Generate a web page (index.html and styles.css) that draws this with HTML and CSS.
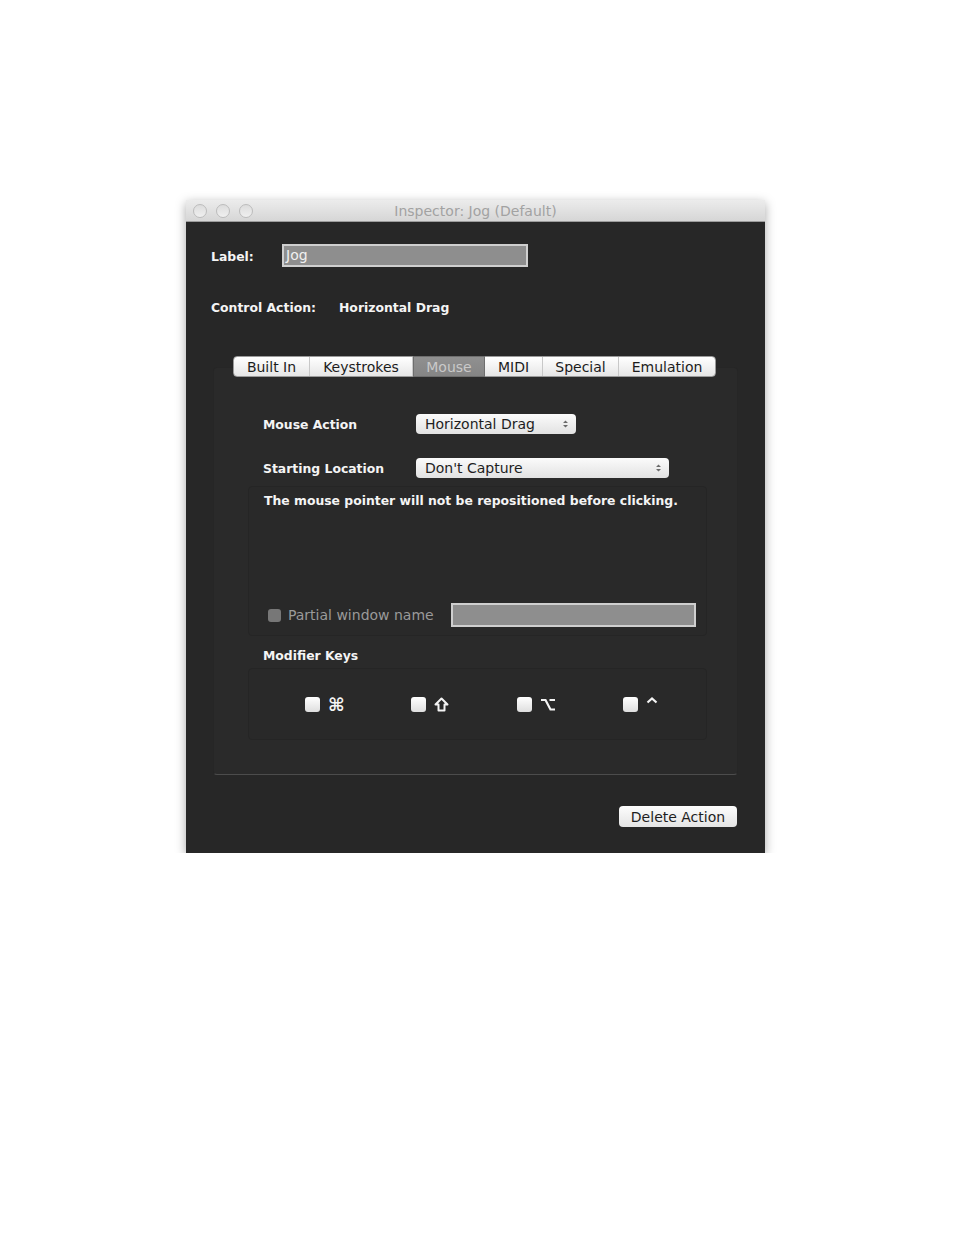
FILE: index.html
```html
<!DOCTYPE html>
<html lang="en">

<head>
    <meta charset="UTF-8">
    <title>Inspector: Jog (Default)</title>
    <link rel="stylesheet" href="styles.css">
</head>

<body>
    <div class="window">
        <div class="titlebar">
            <div class="lights">
                <span class="light"></span>
                <span class="light"></span>
                <span class="light"></span>
            </div>
            <div class="title">Inspector: Jog (Default)</div>
            <div></div>
        </div>

        <div class="content">
            <div class="row label-row">
                <span class="label name-label">Label:</span>
                <div class="textfield label-field">Jog</div>
            </div>

            <div class="row action-row">
                <span class="label action-label">Control Action:</span>
                <span class="label">Horizontal Drag</span>
            </div>

            <div class="tabview">
                <div class="tabs">
                    <span class="tab tab-builtin">Built In</span>
                    <span class="tab tab-keys">Keystrokes</span>
                    <span class="tab tab-mouse selected">Mouse</span>
                    <span class="tab tab-midi">MIDI</span>
                    <span class="tab tab-special">Special</span>
                    <span class="tab tab-emu last">Emulation</span>
                </div>

                <div class="tabbox">
                    <div class="form-row">
                        <span class="label form-label">Mouse Action</span>
                        <div class="popup popup-action">
                            <span>Horizontal Drag</span>
                            <svg class="arrows" width="7" height="10" viewBox="0 0 7 10">
                                <path d="M1 4 L3.5 1.5 L6 4 Z M1 6 L3.5 8.5 L6 6 Z" fill="#6a6a6a" />
                            </svg>
                        </div>
                    </div>

                    <div class="form-row start-row">
                        <span class="label form-label">Starting Location</span>
                        <div class="popup popup-start">
                            <span>Don't Capture</span>
                            <svg class="arrows" width="7" height="10" viewBox="0 0 7 10">
                                <path d="M1 4 L3.5 1.5 L6 4 Z M1 6 L3.5 8.5 L6 6 Z" fill="#6a6a6a" />
                            </svg>
                        </div>
                    </div>

                    <div class="groupbox desc-box">
                        <p class="label desc">The mouse pointer will not be repositioned before clicking.</p>
                        <div class="partial-row">
                            <span class="checkbox disabled"></span>
                            <span class="partial-text">Partial window name</span>
                            <div class="textfield partial-field"></div>
                        </div>
                    </div>

                    <div class="label modifier-title">Modifier Keys</div>

                    <div class="groupbox modifier-box">
                        <div class="modifier">
                            <span class="checkbox"></span>
                            <span class="key">⌘</span>
                        </div>
                        <div class="modifier">
                            <span class="checkbox"></span>
                            <svg class="key-icon" width="15" height="15" viewBox="0 0 15 15">
                                <path d="M7.5 1.5 L13.5 7.5 H10.5 V13.5 H4.5 V7.5 H1.5 Z" fill="none" stroke="#f4f4f4" stroke-width="2" stroke-linejoin="round" />
                            </svg>
                        </div>
                        <div class="modifier">
                            <span class="checkbox"></span>
                            <svg class="key-icon" width="16" height="15" viewBox="0 0 16 15">
                                <path d="M1 3 H5.5 L10.5 12.5 H15 M9.5 3 H15" fill="none" stroke="#f4f4f4" stroke-width="2.2" />
                            </svg>
                        </div>
                        <div class="modifier">
                            <span class="checkbox"></span>
                            <svg class="key-icon caret" width="12" height="15" viewBox="0 0 12 15">
                                <path d="M1.5 5.5 L6 1.5 L10.5 5.5" fill="none" stroke="#f4f4f4" stroke-width="2.2" />
                            </svg>
                        </div>
                    </div>
                </div>
            </div>

            <div class="footer">
                <button class="button">Delete Action</button>
            </div>
        </div>
    </div>
</body>

</html>
```

FILE: styles.css
```css
* {
    margin: 0;
    padding: 0;
    box-sizing: border-box;
}

body {
    background: #fff;
    font-family: "DejaVu Sans", Verdana, sans-serif;
    font-size: 14px;
}

.window {
    width: 579px;
    height: 653px;
    margin: 200px 0 0 186px;
    display: flex;
    flex-direction: column;
    box-shadow: 0 3px 10px rgba(0, 0, 0, 0.35);
}

.titlebar {
    height: 22px;
    display: grid;
    grid-template-columns: 1fr auto 1fr;
    align-items: center;
    background: linear-gradient(to bottom, #ececec, #d6d6d6);
    border-bottom: 1px solid #9c9c9c;
}

.lights {
    display: flex;
    gap: 9px;
    padding-left: 7px;
}

.light {
    width: 14px;
    height: 14px;
    border-radius: 50%;
    border: 1px solid #bcbcbc;
    background: linear-gradient(to bottom, #dcdcdc, #f0f0f0);
}

.title {
    color: #a2a2a2;
    font-size: 14px;
    padding-top: 1px;
}

.content {
    flex: 1;
    background: #272727;
    display: flex;
    flex-direction: column;
    padding: 22px 28px 26px 25px;
}

.label {
    color: #f4f4f4;
    font-weight: bold;
    font-size: 12.4px;
}

.row {
    display: flex;
    align-items: center;
}

.name-label {
    width: 71px;
    padding-top: 1px;
}

.textfield {
    background: #8e8e8e;
    border: 2px solid #cfcfcf;
    color: #f0f0f0;
    font-size: 14px;
    line-height: 19px;
    padding-left: 2px;
}

.label-field {
    width: 246px;
    height: 23px;
}

.action-row {
    height: 20px;
    margin-top: 30px;
}

.action-label {
    width: 128px;
}

.tabview {
    margin-top: 39px;
    margin-left: 2px;
    margin-right: -1px;
    display: flex;
    flex-direction: column;
}

.tabs {
    position: relative;
    z-index: 1;
    align-self: center;
    display: flex;
    height: 21px;
    margin-bottom: -10px;
    margin-left: -2px;
    border-radius: 4px;
    background: linear-gradient(to bottom, #ffffff, #e6e6e6);
    border: 1px solid #9a9a9a;
}

.tab {
    display: flex;
    align-items: center;
    justify-content: center;
    color: #1c1c1c;
    font-size: 14px;
    border-right: 1px solid #c8c8c8;
}

.tab.last {
    border-right: none;
}

.tab-builtin { width: 76px; }
.tab-keys { width: 103px; }
.tab-mouse { width: 72px; }
.tab-midi { width: 58px; }
.tab-special { width: 76px; }
.tab-emu { width: 96px; }

.tab.selected {
    background: linear-gradient(to bottom, #909090, #858585);
    color: #c9c9c9;
    border: 1px solid #6e6e6e;
    margin: -1px 0;
}

.tabbox {
    height: 408px;
    background: #2a2a2a;
    border: 1px solid #262626;
    border-bottom: 1px solid #4c4c4c;
    border-radius: 4px;
    padding: 46px 30px 0 34px;
    display: flex;
    flex-direction: column;
}

.form-row {
    display: flex;
    align-items: center;
    height: 20px;
    padding-left: 15px;
}

.start-row {
    margin-top: 24px;
}

.form-label {
    width: 153px;
}

.popup {
    height: 20px;
    display: flex;
    align-items: center;
    justify-content: space-between;
    padding: 0 7px 0 9px;
    border-radius: 4px;
    background: linear-gradient(to bottom, #fbfbfb, #e2e2e2);
    color: #1e1e1e;
    font-size: 14px;
}

.popup-action {
    width: 160px;
}

.popup-start {
    width: 253px;
}

.groupbox {
    background: #292929;
    border: 1px solid #252525;
    border-radius: 4px;
}

.desc-box {
    margin-top: 8px;
    height: 150px;
    display: flex;
    flex-direction: column;
    justify-content: space-between;
    padding: 6px 10px 8px 15px;
}

.partial-row {
    display: flex;
    align-items: center;
    padding-left: 4px;
}

.checkbox {
    width: 15px;
    height: 15px;
    border-radius: 3px;
    background: linear-gradient(to bottom, #ffffff, #dedede);
}

.checkbox.disabled {
    width: 13px;
    height: 13px;
    background: #777;
}

.partial-text {
    color: #9a9a9a;
    font-size: 14px;
    margin-left: 7px;
    width: 163px;
}

.partial-field {
    width: 246px;
    height: 24px;
}

.modifier-title {
    margin-top: 12px;
    height: 16px;
    line-height: 16px;
    padding-left: 15px;
}

.modifier-box {
    margin-top: 4px;
    height: 72px;
    display: grid;
    grid-template-columns: repeat(4, 106px);
    align-items: center;
    padding-left: 56px;
}

.modifier {
    display: flex;
    align-items: center;
    gap: 8px;
}

.key {
    color: #f4f4f4;
    font-weight: bold;
    font-size: 18px;
    line-height: 15px;
}

.key-icon {
    display: block;
}

.footer {
    margin-top: auto;
    display: flex;
    justify-content: flex-end;
}

.button {
    width: 118px;
    height: 21px;
    border: none;
    border-radius: 4px;
    background: linear-gradient(to bottom, #fdfdfd, #e4e4e4);
    color: #1e1e1e;
    font-family: "DejaVu Sans", Verdana, sans-serif;
    font-size: 14px;
}
```
